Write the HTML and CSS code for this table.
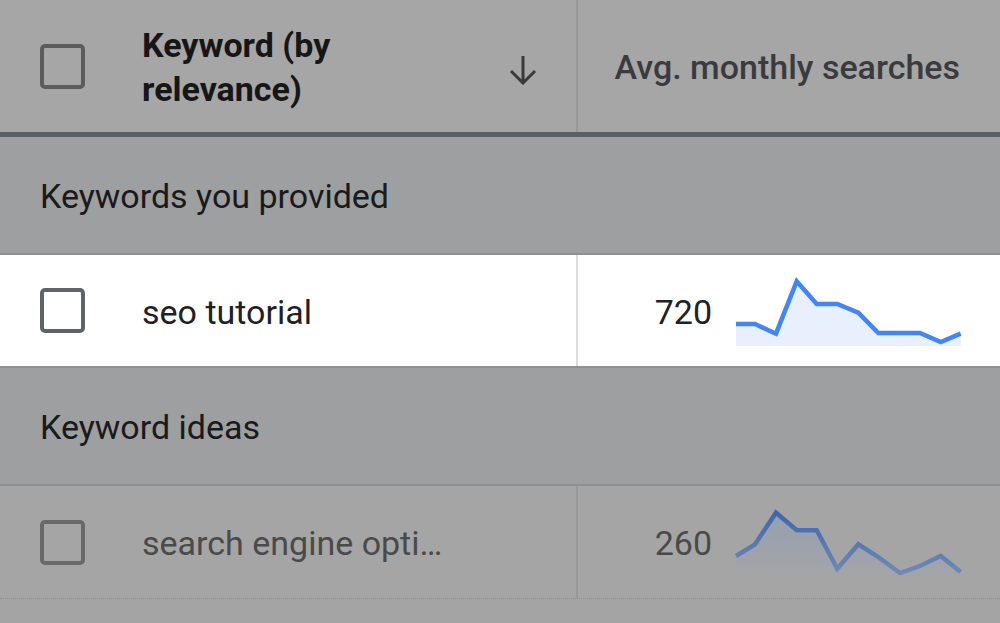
FILE: index.html
```html
<!DOCTYPE html>
<html>
<head>
<meta charset="utf-8">
<link rel="stylesheet" href="styles.css">
</head>
<body>
<div class="table">
  <div class="row head">
    <div class="cell first">
      <span class="cb"></span>
      <span class="head-title">Keyword (by relevance)</span>
      <svg class="arrow" viewBox="0 0 30 30" width="30" height="30"><path d="M15 1 V27 M3 16 L15 28 L27 16" fill="none" stroke="#3a3a3b" stroke-width="3"/></svg>
    </div>
    <div class="cell second head-right">Avg. monthly searches</div>
  </div>
  <div class="section">Keywords you provided</div>
  <div class="row data active">
    <div class="cell first">
      <span class="cb"></span>
      <span class="kw">seo tutorial</span>
    </div>
    <div class="cell second">
      <span class="num">720</span>
      <svg class="spark" viewBox="0 0 230 70" width="230" height="70">
        <path d="M0 45 L19 45 L40 54.7 L60.7 2.3 L80.7 25 L101.3 25 L122.3 33.7 L142.3 54 L164 54 L184 54 L204.7 63 L224.7 54.7 L224.7 67 L0 67 Z" fill="#e8f0fe"/>
        <path d="M0 45 L19 45 L40 54.7 L60.7 2.3 L80.7 25 L101.3 25 L122.3 33.7 L142.3 54 L164 54 L184 54 L204.7 63 L224.7 54.7" fill="none" stroke="#4285f4" stroke-width="4.5" stroke-linejoin="miter"/>
      </svg>
    </div>
  </div>
  <div class="section">Keyword ideas</div>
  <div class="row data dim">
    <div class="cell first">
      <span class="cb"></span>
      <span class="kw">search engine opti…</span>
    </div>
    <div class="cell second">
      <span class="num">260</span>
      <svg class="spark" viewBox="0 0 230 70" width="230" height="70">
        <defs>
          <linearGradient id="sf" x1="0" y1="0" x2="0" y2="1">
            <stop offset="0" stop-color="#97a0ad"/>
            <stop offset="1" stop-color="#a3a5a8"/>
          </linearGradient>
          <linearGradient id="ss" x1="0" y1="0" x2="0" y2="1">
            <stop offset="0" stop-color="#3f67ad"/>
            <stop offset="1" stop-color="#6f89b6"/>
          </linearGradient>
        </defs>
        <path d="M0 43 L19 31.3 L40 -0.3 L60.7 17.3 L80.7 17.3 L101.3 55.7 L122.3 31.3 L142.3 44 L164 60 L184 53 L204.7 43 L224.7 59 L224.7 65 L0 65 Z" fill="url(#sf)"/>
        <path d="M0 43 L19 31.3 L40 -0.3 L60.7 17.3 L80.7 17.3 L101.3 55.7 L122.3 31.3 L142.3 44 L164 60 L184 53 L204.7 43 L224.7 59" fill="none" stroke="url(#ss)" stroke-width="4.5"/>
      </svg>
    </div>
  </div>
</div>
</body>
</html>
```
FILE: styles.css
```css
html, body {
  margin: 0;
  padding: 0;
}
body {
  width: 1000px;
  height: 623px;
  overflow: hidden;
  background: #a4a4a4;
  font-family: Roboto, "Noto Sans", sans-serif;
  font-size: 34px;
}
.table {
  display: flex;
  flex-direction: column;
}
.row {
  display: grid;
  grid-template-columns: 578px 1fr;
}
.cell {
  display: flex;
  align-items: center;
}
.first {
  padding-left: 40px;
  border-right: 2px solid #989898;
}
.head {
  height: 132px;
  background: #a6a6a6;
  border-bottom: 5px solid #5b5e62;
}
.head .first {
  padding-right: 40px;
}
.cb {
  flex: none;
  width: 45px;
  height: 45px;
  box-sizing: border-box;
  border: 4px solid #5c5c5c;
  border-radius: 5px;
}
.head-title {
  margin-left: 57px;
  width: 250px;
  font-weight: 700;
  line-height: 44px;
  color: #161616;
  padding-top: 2px;
}
.arrow {
  margin-left: auto;
  margin-top: 8px;
  margin-right: -2px;
}
.head-right {
  justify-content: flex-end;
  padding-right: 40px;
  font-weight: 500;
  color: #3a3b3e;
  padding-top: 2px;
}
.section {
  box-sizing: border-box;
  display: flex;
  align-items: center;
  padding-left: 40px;
  padding-top: 2px;
  background: #9e9fa1;
  border-bottom: 2px solid #8f9092;
  height: 118px;
  color: #1a1a1a;
}
.data {
  height: 111px;
}
.active {
  background: #ffffff;
  border-bottom: 2px solid #8f9092;
}
.active .first {
  border-right-color: #dadce0;
}
.active .cb {
  border-color: #5f6368;
}
.active .kw,
.active .num {
  color: #202124;
}
.dim {
  background: #a5a5a5;
  height: 112px;
  border-bottom: 1px dotted #8e8e8e;
}
.dim .cb {
  border-color: #696969;
}
.dim .kw,
.dim .num {
  color: #4a4a4a;
}
.kw {
  margin-left: 57px;
  padding-top: 2px;
}
.num {
  width: 134px;
  text-align: right;
  padding-top: 2px;
}
.spark {
  margin-left: 24px;
  overflow: visible;
}
.active .spark {
  margin-top: 6px;
}
.dim .spark {
  margin-top: 12px;
}
```
